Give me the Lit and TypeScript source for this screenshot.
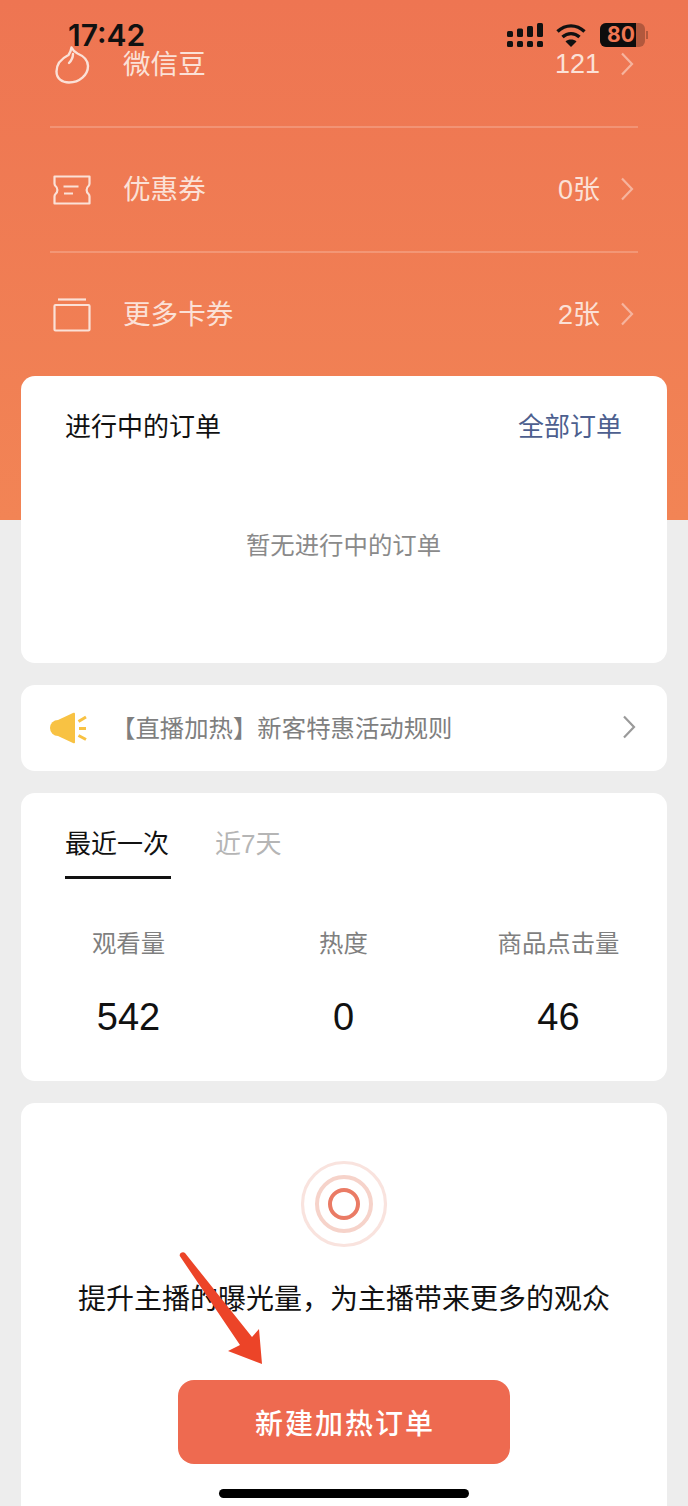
import { LitElement, css, html } from "lit";
import { customElement } from "lit/decorators.js";

const chevron = html`<svg class="chevron" viewBox="0 0 14 24" fill="none"><path d="M2 1.500l10 10.500L2 22.500" stroke="currentColor" stroke-width="2.200"/></svg>`;

const beanIcon = html`<svg viewBox="0 0 36 40" width="36" height="40" fill="none" stroke="currentColor" stroke-width="2.400" stroke-linecap="round" stroke-linejoin="round">
  <path d="M17.500 2.500c1.500 3 3 4.500 6 6 6 2.500 10.500 6 10.500 12.500 0 9-8.500 16.500-19 16.500C8 37.500 2.500 33.500 2.500 26.500c0-8 5-13 12-16.500 1.500-2 2.500-4.500 3-7.500z"/>
  <path d="M19 9c0 3-1 6-4 9"/>
</svg>`;

const ticketIcon = html`<svg viewBox="0 0 38 30" width="38" height="30" fill="none" stroke="currentColor" stroke-width="2.200" stroke-linejoin="round">
  <path d="M1.500 1.500h35v7c0 0 0 1.500-1 2.500-2.500 2-2.500 6 0 8 1 1 1 2.500 1 2.500v7h-35v-7c0 0 0-1.500 1-2.500 2.500-2 2.500-6 0-8-1-1-1-2.500-1-2.500z"/>
  <path d="M10.500 11.500h15M11 18.500h9"/>
</svg>`;

const walletIcon = html`<svg viewBox="0 0 38 34" width="38" height="34" fill="none" stroke="currentColor" stroke-width="2.200">
  <path d="M5 1.500h28"/>
  <rect x="1.500" y="7" width="35" height="25.500" rx="1"/>
</svg>`;

const hornIcon = html`<svg viewBox="0 0 38 32" width="38" height="32">
  <circle cx="8" cy="16" r="8" fill="#f8c243"/>
  <path d="M8 8L23.500 .8c.8-.3 1.500.2 1.500 1v28.400c0 .8-.7 1.300-1.500 1L8 24z" fill="#f8c243"/>
  <path d="M28.500 9.500l7.500-4.500M29 16.500h7M28.500 23.500l7.500 4" stroke="#f8c243" stroke-width="3" fill="none"/>
</svg>`;

@customElement("app-root")
export class AppRoot extends LitElement {
  private assetRow(icon: unknown, label: string, value: string) {
    return html`
      <div class="asset-row">
        <span class="asset-icon">${icon}</span>
        <span class="asset-label">${label}</span>
        <span class="asset-value ${value.endsWith("张") ? "with-unit" : ""}">${value}</span>
        ${chevron}
      </div>
    `;
  }

  render() {
    return html`
      <div class="page">
        <header class="top">
          ${this.assetRow(beanIcon, "微信豆", "121")}
          ${this.assetRow(ticketIcon, "优惠券", "0张")}
          ${this.assetRow(walletIcon, "更多卡券", "2张")}
        </header>

        <main class="cards">
          <section class="card orders">
            <div class="orders-head">
              <span class="orders-title">进行中的订单</span>
              <span class="orders-all">全部订单</span>
            </div>
            <div class="orders-empty">暂无进行中的订单</div>
          </section>

          <section class="card notice">
            <span class="notice-icon">${hornIcon}</span>
            <span class="notice-text">【直播加热】新客特惠活动规则</span>
            ${chevron}
          </section>

          <section class="card stats">
            <div class="tabs">
              <span class="tab active">最近一次</span>
              <span class="tab">近7天</span>
            </div>
            <div class="stat-grid">
              <div class="stat"><span class="stat-label">观看量</span><span class="stat-value">542</span></div>
              <div class="stat"><span class="stat-label">热度</span><span class="stat-value">0</span></div>
              <div class="stat"><span class="stat-label">商品点击量</span><span class="stat-value">46</span></div>
            </div>
          </section>

          <section class="card promo">
            <svg class="rings" viewBox="0 0 88 88" width="88" height="88" fill="none">
              <circle cx="44" cy="44" r="41.500" stroke="#f9e3de" stroke-width="3.200"/>
              <circle cx="44" cy="44" r="27" stroke="#f6d3ca" stroke-width="4"/>
              <circle cx="44" cy="44" r="14" stroke="#ea7b65" stroke-width="4"/>
            </svg>
            <p class="promo-text">提升主播的曝光量，为主播带来更多的观众</p>
            <button class="promo-btn">新建加热订单</button>
          </section>
        </main>

        <!-- status bar sits over the scrolled content -->
        <div class="status">
          <span class="time">17:42</span>
          <svg class="signal" viewBox="0 0 36 24" width="36" height="24" fill="#111">
            <rect x="0" y="8" width="6" height="6" rx="1.500"/><rect x="10" y="5.500" width="6" height="8.500" rx="1.500"/>
            <rect x="20" y="3" width="6" height="11" rx="1.500"/><rect x="30" y="0" width="6" height="14" rx="1.500"/>
            <rect x="0" y="18" width="6" height="6" rx="1.500"/><rect x="10" y="18" width="6" height="6" rx="1.500"/>
            <rect x="20" y="18" width="6" height="6" rx="1.500"/><rect x="30" y="18" width="6" height="6" rx="1.500"/>
          </svg>
          <svg class="wifi" viewBox="0 0 30 24" width="30" height="24" fill="none" stroke="#111" stroke-width="3.400">
            <path d="M1.500 8.500c8-7.500 19-7.500 27 0M6.500 14c5-4.500 12-4.500 17 0"/>
            <path d="M15 24l-5.500-5.500c3-2.600 8-2.600 11 0z" fill="#111" stroke="none"/>
          </svg>
          <div class="battery"><span class="battery-fill"></span><span class="battery-num">80</span></div>
          <span class="battery-cap"></span>
        </div>

        <!-- red annotation arrow drawn over the screenshot -->
        <svg class="arrow" viewBox="0 0 100 120" width="100" height="120">
          <path d="M.8 6C0 3 4 1 6 3L73 87l7-8 3 35-34-13 12-6z" fill="#ec4428"/>
        </svg>

        <div class="home-bar"></div>
      </div>
    `;
  }

  static styles = css`
    :host {
      display: block;
      font-family: "Liberation Sans", "Noto Sans CJK SC", sans-serif;
    }
    .page {
      position: relative;
      width: 688px;
      height: 1506px;
      overflow: hidden;
      background: #ededed;
    }
    .top {
      box-sizing: border-box;
      height: 520px;
      padding: 3px 50px 0;
      color: #fbe1d7;
      background: linear-gradient(180deg, #ee7552 0%, #f28455 100%);
    }
    .asset-row {
      display: flex;
      align-items: center;
      height: 125px;
      box-sizing: border-box;
      border-bottom: 2px solid rgba(255, 255, 255, 0.2);
    }
    .asset-row:last-child {
      border-bottom-color: transparent;
    }
    .asset-icon {
      display: flex;
      justify-content: center;
      width: 44px;
      margin-right: 29px;
    }
    .asset-label {
      flex: 1;
      font-size: 27.600px;
      margin-bottom: 5px;
    }
    .asset-value {
      font-size: 27px;
      margin-right: 20px;
    }
    .asset-value.with-unit {
      margin-bottom: 5px;
    }
    .chevron {
      width: 14px;
      height: 24px;
      margin-right: 4px;
      margin-bottom: 2px;
      color: #f6b49e;
    }
    .cards {
      display: flex;
      flex-direction: column;
      gap: 22px;
      margin: -144px 21px 0;
      position: relative;
    }
    .card {
      background: #fff;
      border-radius: 14px;
    }
    .orders {
      height: 287px;
      box-sizing: border-box;
      padding: 30px 45px 0 44px;
    }
    .orders-head {
      display: flex;
      justify-content: space-between;
      align-items: center;
      height: 36px;
      font-size: 26px;
    }
    .orders-title {
      color: #111;
    }
    .orders-all {
      color: #4d5f8f;
    }
    .orders-empty {
      margin-top: 86px;
      text-align: center;
      font-size: 24.400px;
      line-height: 36px;
      color: #8a8a8a;
    }
    .notice {
      display: flex;
      align-items: center;
      height: 86px;
      padding: 0 31px 0 29px;
    }
    .notice-icon {
      display: flex;
      width: 61px;
    }
    .notice-text {
      flex: 1;
      font-size: 24.400px;
      color: #7f7f7f;
      margin-bottom: 4px;
    }
    .notice .chevron {
      color: #9a9a9a;
      margin-right: 0;
    }
    .stats {
      height: 288px;
      box-sizing: border-box;
      padding: 28px 0 0;
    }
    .tabs {
      display: flex;
      gap: 44px;
      padding-left: 44px;
    }
    .tab {
      font-size: 26px;
      line-height: 46px;
      height: 55px;
      color: #b5b5b5;
    }
    .tab.active {
      color: #111;
      border-bottom: 3px solid #111;
      width: 106px;
    }
    .stat-grid {
      display: grid;
      grid-template-columns: repeat(3, 215px);
      margin-top: 48px;
    }
    .stat {
      display: flex;
      flex-direction: column;
      align-items: center;
      gap: 34px;
    }
    .stat-label {
      font-size: 24.400px;
      line-height: 34px;
      color: #7f7f7f;
    }
    .stat-value {
      font-size: 38px;
      line-height: 44px;
      color: #111;
    }
    .promo {
      display: flex;
      flex-direction: column;
      align-items: center;
      height: 440px;
      padding-top: 57px;
      box-sizing: border-box;
    }
    .rings {
      display: block;
    }
    .promo-text {
      margin: 32px 0 0;
      font-size: 28px;
      line-height: 40px;
      color: #111;
    }
    .promo-btn {
      width: 332px;
      height: 84px;
      margin-top: 60px;
      padding: 0 0 0 2px;
      border: 0;
      border-radius: 16px;
      background: #ee6a50;
      color: #fff;
      font-family: inherit;
      font-size: 28px;
      letter-spacing: 2px;
      font-weight: 500;
    }
    .status {
      position: absolute;
      top: 0;
      left: 0;
      right: 0;
      height: 50px;
    }
    .time {
      position: absolute;
      left: 68px;
      top: 19px;
      font-size: 30px;
      line-height: 32px;
      font-family: Inter, "Liberation Sans", sans-serif;
      font-weight: 600;
      color: #111;
    }
    .signal {
      position: absolute;
      left: 507px;
      top: 23px;
    }
    .wifi {
      position: absolute;
      left: 556px;
      top: 23px;
    }
    .battery {
      position: absolute;
      left: 600px;
      top: 23px;
      width: 45px;
      height: 24px;
      border-radius: 6px;
      overflow: hidden;
      background: #b2583d;
    }
    .battery-fill {
      position: absolute;
      left: 0;
      top: 0;
      bottom: 0;
      width: 36px;
      background: #0d0d0d;
    }
    .battery-num {
      position: absolute;
      left: 7px;
      top: 0;
      font-size: 21px;
      line-height: 24px;
      font-weight: 700;
      font-family: Inter, "Liberation Sans", sans-serif;
      color: #ef7752;
    }
    .battery-cap {
      position: absolute;
      left: 646px;
      top: 31px;
      width: 2px;
      height: 8px;
      background: #b2583d;
    }
    .arrow {
      position: absolute;
      left: 179px;
      top: 1250px;
    }
    .home-bar {
      position: absolute;
      left: 219px;
      top: 1489px;
      width: 250px;
      height: 9px;
      border-radius: 5px;
      background: #000;
    }
  `;
}

declare global {
  interface HTMLElementTagNameMap {
    "app-root": AppRoot;
  }
}
